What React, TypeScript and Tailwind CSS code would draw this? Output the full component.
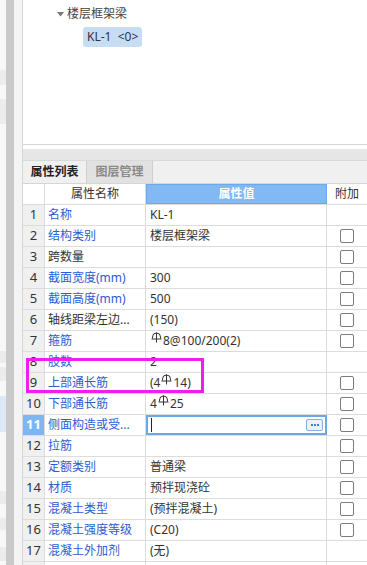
import React from "react";

type Row = {
  n: number;
  name: string;
  value: string;
  blue: boolean;
  check: boolean;
};

// "#" in a value stands for the rebar grade symbol
const rows: Row[] = [
  { n: 1, name: "名称", value: "KL-1", blue: true, check: false },
  { n: 2, name: "结构类别", value: "楼层框架梁", blue: true, check: true },
  { n: 3, name: "跨数量", value: "", blue: false, check: true },
  { n: 4, name: "截面宽度(mm)", value: "300", blue: true, check: true },
  { n: 5, name: "截面高度(mm)", value: "500", blue: true, check: true },
  { n: 6, name: "轴线距梁左边...", value: "(150)", blue: false, check: true },
  { n: 7, name: "箍筋", value: "#8@100/200(2)", blue: true, check: true },
  { n: 8, name: "肢数", value: "2", blue: true, check: false },
  { n: 9, name: "上部通长筋", value: "(4#14)", blue: true, check: true },
  { n: 10, name: "下部通长筋", value: "4#25", blue: true, check: true },
  { n: 11, name: "侧面构造或受...", value: "", blue: true, check: true },
  { n: 12, name: "拉筋", value: "", blue: true, check: true },
  { n: 13, name: "定额类别", value: "普通梁", blue: true, check: true },
  { n: 14, name: "材质", value: "预拌现浇砼", blue: true, check: true },
  { n: 15, name: "混凝土类型", value: "(预拌混凝土)", blue: true, check: true },
  { n: 16, name: "混凝土强度等级", value: "(C20)", blue: true, check: true },
  { n: 17, name: "混凝土外加剂", value: "(无)", blue: true, check: false },
];

const Rebar = () => (
  <svg
    width="11"
    height="11"
    viewBox="0 0 11 11"
    fill="none"
    stroke="#333"
    strokeWidth="1"
    className="mx-[1px] inline-block align-[2px]"
  >
    <path d="M1.5 6.5V5a4 4 0 0 1 8 0v1.5M0.5 7h10M5.5 0.5v10" />
  </svg>
);

const Value = ({ text }: { text: string }) => {
  const parts = text.split("#");
  return (
    <span className="whitespace-nowrap">
      {parts.map((p, i) => (
        <React.Fragment key={i}>
          {i > 0 && <Rebar />}
          {p}
        </React.Fragment>
      ))}
    </span>
  );
};

const Checkbox = () => (
  <div className="h-[14px] w-[14px] rounded-[2px] border border-[#7c7c7c] bg-white" />
);

const App = () => {
  return (
    <div className="relative flex h-[565px] w-[367px] overflow-hidden bg-white font-['Noto_Sans','Noto_Sans_CJK_SC',sans-serif] text-[12px] text-[#333]">
      {/* left edge of the neighbouring panel */}
      <div className="flex w-[6px] flex-col bg-[#f8f8f8]">
        <div className="mt-[70px] h-[15px] bg-[#ececec]" />
        <div className="mt-[14px] h-[25px] bg-[#ececec]" />
        <div className="mt-[227px] h-[12px] bg-[#ececec]" />
        <div className="mt-[4px] h-[14px] bg-[#ececec]" />
        <div className="mt-[15px] h-[36px] bg-[#dce8f6]" />
        <div className="mt-[59px] h-[13px] bg-[#ececec]" />
        <div className="mt-[14px] h-[12px] bg-[#ececec]" />
        <div className="mt-[17px] h-[14px] bg-[#ececec]" />
      </div>
      <div className="w-[8px] bg-[#c9c9c9]" />
      <div className="w-[8px] bg-[#f4f4f4]" />

      <div className="flex min-w-0 flex-1 flex-col border-l border-[#d6d6d6]">
        {/* tree */}
        <div className="h-[145px] shrink-0 border-b border-[#d6d6d6] pt-[6px]">
          <div className="flex h-[16px] items-center pl-[34px]">
            <svg width="7" height="5" viewBox="0 0 7 5" className="mr-[3px]">
              <path d="M0 0h7L3.5 4.5z" fill="#777" />
            </svg>
            <span className="text-[#444]">楼层框架梁</span>
          </div>
          <div className="ml-[60px] mt-[5px] flex h-[20px] w-fit items-center rounded-[3px] bg-[#c7ddf4] px-[4px] text-[#333]">
            KL-1&nbsp;&nbsp;&lt;0&gt;
          </div>
        </div>
        <div className="h-[4px] shrink-0" />
        <div className="h-[12px] shrink-0 border-b border-[#d9d9d9] bg-[#e6e6e6]" />

        {/* tabs */}
        <div className="flex h-[23px] shrink-0 border-b border-[#d6d6d6] bg-[#f0f0f0]">
          <div className="flex w-[64px] items-center justify-center border-r border-[#cfcfcf] bg-[#f0f0f0] font-bold text-[#222]">
            属性列表
          </div>
          <div className="flex w-[66px] items-center justify-center border-r border-[#cfcfcf] bg-[#e1e1e1] font-bold text-[#8a8a8a]">
            图层管理
          </div>
        </div>

        {/* header */}
        <div className="flex h-[21px] shrink-0 border-b border-[#dcdcdc]">
          <div className="w-[22px] border-r border-[#dcdcdc]" />
          <div className="flex w-[101px] items-center justify-center border-r border-[#dcdcdc]">
            属性名称
          </div>
          <div className="flex w-[181px] items-center justify-center border border-[#6ea9e9] bg-[#80b9f3] font-bold text-white">
            属性值
          </div>
          <div className="flex flex-1 items-center justify-center">附加</div>
        </div>

        {rows.map((r) => {
          const active = r.n === 11;
          return (
            <div key={r.n} className="flex h-[21px] shrink-0 border-b border-[#dcdcdc]">
              <div
                className={
                  active
                    ? "flex w-[22px] items-center justify-center border-r border-[#dcdcdc] bg-[#7db7f3] text-[13px] font-bold text-white"
                    : "flex w-[22px] items-center justify-center border-r border-[#dcdcdc] bg-[#f0f0f0] text-[13px] text-[#333]"
                }
              >
                {r.n}
              </div>
              <div
                className={
                  r.blue
                    ? "flex w-[101px] items-center overflow-hidden whitespace-nowrap border-r border-[#dcdcdc] pl-[3px] text-[#2d5bd2]"
                    : "flex w-[101px] items-center overflow-hidden whitespace-nowrap border-r border-[#dcdcdc] pl-[3px] text-[#333]"
                }
              >
                {r.name}
              </div>
              {active ? (
                <div className="flex w-[181px] items-center border-2 border-[#6aa8e8] pl-[3px] pr-[2px]">
                  <div className="h-[14px] w-[1px] bg-[#222]" />
                  <div className="ml-auto flex h-[12px] w-[17px] items-center justify-center gap-[1px] rounded-[2px] border border-[#7fb0e8] bg-[#eaf2fc]">
                    <span className="h-[2px] w-[2px] bg-[#3a7fd8]" />
                    <span className="h-[2px] w-[2px] bg-[#3a7fd8]" />
                    <span className="h-[2px] w-[2px] bg-[#3a7fd8]" />
                  </div>
                </div>
              ) : (
                <div className="flex w-[181px] items-center border-r border-[#dcdcdc] pl-[4px]">
                  <Value text={r.value} />
                </div>
              )}
              <div className="flex flex-1 items-center justify-center">
                {r.check && <Checkbox />}
              </div>
            </div>
          );
        })}

        {/* next row, only its top edge shows */}
        <div className="flex h-[21px] shrink-0">
          <div className="w-[22px] border-r border-[#dcdcdc] bg-[#f0f0f0]" />
          <div className="w-[101px] border-r border-[#dcdcdc]" />
          <div className="w-[181px] border-r border-[#dcdcdc]" />
          <div className="flex-1" />
        </div>
      </div>

      {/* annotation box */}
      <div className="pointer-events-none absolute left-[26px] top-[358px] h-[35px] w-[178px] border-[3px] border-[#f01cf0]" />
    </div>
  );
};

export default App;
